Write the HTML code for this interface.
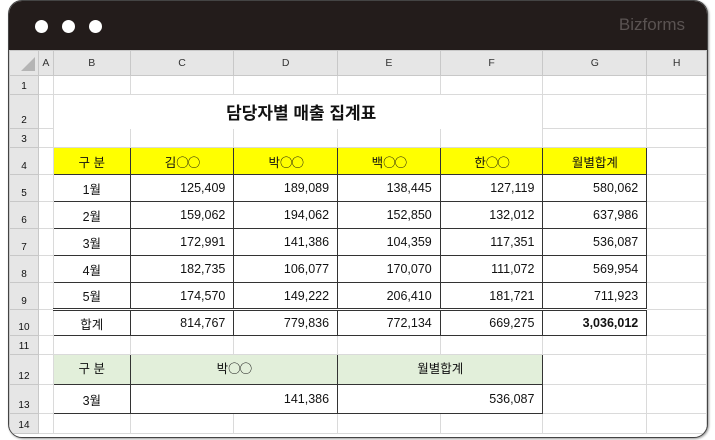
<!DOCTYPE html><html><head><meta charset="utf-8"><style>
body{margin:0;width:715px;height:440px;background:#fff;overflow:hidden;font-family:"Liberation Sans","Noto Sans CJK KR",sans-serif}
.win{position:absolute;left:8px;top:0;width:698px;height:436px;border:1.5px solid #444;border-radius:14px;overflow:hidden;background:#fff;box-shadow:1px 1px 2px #999}
.bar{position:absolute;left:0;top:0;width:100%;height:49px;background:#231c1b}
.dot{position:absolute;top:19px;width:13px;height:13px;border-radius:50%;background:#fff}
.logo{position:absolute;right:22px;top:14px;color:#5a5352;font-size:17px}
table{position:absolute;left:0;top:49px;border-collapse:collapse;table-layout:fixed;font-size:12.5px}
td{border:1px solid #dadada;padding:0 5px;white-space:nowrap;overflow:visible;color:#111}
tr.h td{background:#e6e6e6;text-align:center;font-size:10.5px;color:#333;border-color:#c8c8c8}
td.r{background:#e6e6e6;text-align:center;font-size:10px;vertical-align:bottom;border-color:#c8c8c8;padding:0 0 2px}
.y{background:#ffff00;text-align:center;border:1px solid #333!important}
.g{background:#e2efda;text-align:center;border:1px solid #333!important;vertical-align:top;padding-top:3px}
.d{border:1px solid #333!important;text-align:right;padding-right:8px}
.top2 td.d{border-top:3px double #333!important}
.o{font-family:"Noto Sans CJK KR",sans-serif;letter-spacing:-1px}
</style></head><body>
<div class="win">
<div class="bar"><div class="dot" style="left:26px"></div><div class="dot" style="left:53px"></div><div class="dot" style="left:80px"></div><div class="logo">Bizforms</div></div>
<table>
<colgroup><col style="width:29px"><col style="width:15px"><col style="width:77px"><col style="width:104px"><col style="width:104px"><col style="width:103px"><col style="width:103px"><col style="width:104px"><col style="width:60px"></colgroup>
<tr class="h" style="height:25px"><td style="padding:0"><svg width="14" height="14" viewBox="0 0 14 14" style="margin-left:8px;margin-top:5px"><path d="M14 0L14 14L0 14Z" fill="#b5b5b5"/></svg></td><td style="padding:0">A</td><td>B</td><td>C</td><td>D</td><td>E</td><td>F</td><td>G</td><td>H</td></tr>
<tr style="height:19px"><td class="r">1</td><td></td><td></td><td></td><td></td><td></td><td></td><td></td><td></td></tr>
<tr style="height:34px"><td class="r">2</td><td></td><td colspan="5" style="text-align:center;font-weight:bold;font-size:17px;padding:0 0 0 6px;border-color:transparent #dadada">담당자별 매출 집계표</td><td></td><td></td></tr>
<tr style="height:19px"><td class="r">3</td><td></td><td></td><td></td><td></td><td></td><td></td><td></td><td></td></tr>
<tr style="height:27px"><td class="r">4</td><td></td><td class="y">구 분</td><td class="y">김<span class="o">○○</span></td><td class="y">박<span class="o">○○</span></td><td class="y">백<span class="o">○○</span></td><td class="y">한<span class="o">○○</span></td><td class="y">월별합계</td><td></td></tr>
<tr style="height:27px"><td class="r">5</td><td></td><td class="d" style="text-align:center;padding:0">1월</td><td class="d">125,409</td><td class="d">189,089</td><td class="d">138,445</td><td class="d">127,119</td><td class="d">580,062</td><td></td></tr>
<tr style="height:27px"><td class="r">6</td><td></td><td class="d" style="text-align:center;padding:0">2월</td><td class="d">159,062</td><td class="d">194,062</td><td class="d">152,850</td><td class="d">132,012</td><td class="d">637,986</td><td></td></tr>
<tr style="height:27px"><td class="r">7</td><td></td><td class="d" style="text-align:center;padding:0">3월</td><td class="d">172,991</td><td class="d">141,386</td><td class="d">104,359</td><td class="d">117,351</td><td class="d">536,087</td><td></td></tr>
<tr style="height:27px"><td class="r">8</td><td></td><td class="d" style="text-align:center;padding:0">4월</td><td class="d">182,735</td><td class="d">106,077</td><td class="d">170,070</td><td class="d">111,072</td><td class="d">569,954</td><td></td></tr>
<tr style="height:27px"><td class="r">9</td><td></td><td class="d" style="text-align:center;padding:0">5월</td><td class="d">174,570</td><td class="d">149,222</td><td class="d">206,410</td><td class="d">181,721</td><td class="d">711,923</td><td></td></tr>
<tr class="top2" style="height:26px"><td class="r">10</td><td></td><td class="d" style="text-align:center;padding:0">합계</td><td class="d">814,767</td><td class="d">779,836</td><td class="d">772,134</td><td class="d">669,275</td><td class="d" style="font-weight:bold">3,036,012</td><td></td></tr>
<tr style="height:19px"><td class="r">11</td><td></td><td></td><td></td><td></td><td></td><td></td><td></td><td></td></tr>
<tr style="height:30px"><td class="r">12</td><td></td><td class="g">구 분</td><td class="g" colspan="2">박<span class="o">○○</span></td><td class="g" colspan="2">월별합계</td><td></td><td></td></tr>
<tr style="height:29px"><td class="r">13</td><td></td><td class="d" style="text-align:center;padding:0">3월</td><td class="d" colspan="2">141,386</td><td class="d" colspan="2">536,087</td><td></td><td></td></tr>
<tr style="height:20px"><td class="r">14</td><td></td><td></td><td></td><td></td><td></td><td></td><td></td><td></td></tr>
</table>
</div>
</body></html>
